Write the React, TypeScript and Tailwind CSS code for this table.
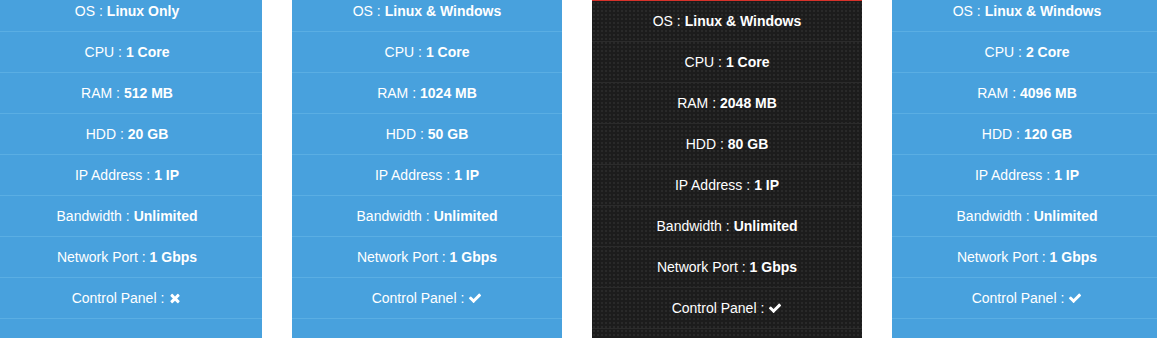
type Plan = {
  os: string;
  cpu: string;
  ram: string;
  hdd: string;
  panel: boolean;
  featured?: boolean;
};

const plans: Plan[] = [
  { os: "Linux Only", cpu: "1 Core", ram: "512 MB", hdd: "20 GB", panel: false },
  { os: "Linux & Windows", cpu: "1 Core", ram: "1024 MB", hdd: "50 GB", panel: true },
  { os: "Linux & Windows", cpu: "1 Core", ram: "2048 MB", hdd: "80 GB", panel: true, featured: true },
  { os: "Linux & Windows", cpu: "2 Core", ram: "4096 MB", hdd: "120 GB", panel: true },
];

// font-awesome 4 style glyphs
const CheckIcon = () => (
  <svg viewBox="0 0 1792 1792" className="w-[14px] h-[14px] fill-current">
    <path d="M1671 566q0 40-28 68l-724 724-136 136q-28 28-68 28t-68-28l-136-136-362-362q-28-28-28-68t28-68l136-136q28-28 68-28t68 28l294 295 656-657q28-28 68-28t68 28l136 136q28 28 28 68z" />
  </svg>
);

const TimesIcon = () => (
  <svg viewBox="0 0 1792 1792" className="w-[14px] h-[14px] fill-current">
    <path d="M1490 1322q0 40-28 68l-136 136q-28 28-68 28t-68-28l-294-294-294 294q-28 28-68 28t-68-28l-136-136q-28-28-28-68t28-68l294-294-294-294q-28-28-28-68t28-68l136-136q28-28 68-28t68 28l294 294 294-294q28-28 68-28t68 28l136 136q28 28 28 68t-28 68l-294 294 294 294q28 28 28 68z" />
  </svg>
);

const Row = ({ label, children, featured }) => (
  <li
    className={
      "h-[41px] flex items-center justify-center border-b " +
      (featured ? "border-[#2b2b2b]" : "border-[#5aaee3]")
    }
  >
    <span>{label} : </span>
    <span className="font-bold ml-1 flex items-center">{children}</span>
  </li>
);

const Column = ({ plan }: { plan: Plan }) => {
  const f = plan.featured;
  return (
    <div
      className={
        "w-[270px] shrink-0 text-white text-[14px] " +
        (f
          ? "bg-[#1c1c1c] bg-[radial-gradient(#292929_1px,transparent_1px)] bg-[length:4px_4px] border-t-2 border-[#d7322a] h-[340px] -mt-[1px]"
          : "bg-[#48a1dd] -mt-[9px] h-[360px]")
      }
    >
      <ul>
        <Row label="OS" featured={f}>{plan.os}</Row>
        <Row label="CPU" featured={f}>{plan.cpu}</Row>
        <Row label="RAM" featured={f}>{plan.ram}</Row>
        <Row label="HDD" featured={f}>{plan.hdd}</Row>
        <Row label="IP Address" featured={f}>1 IP</Row>
        <Row label="Bandwidth" featured={f}>Unlimited</Row>
        <Row label="Network Port" featured={f}>1 Gbps</Row>
        <Row label="Control Panel" featured={f}>
          {plan.panel ? <CheckIcon /> : <TimesIcon />}
        </Row>
      </ul>
    </div>
  );
};

export default function App() {
  return (
    <div className="w-[1157px] h-[338px] overflow-hidden bg-white font-['Liberation_Sans',Arial,sans-serif]">
      <div className="flex items-start gap-[30px] -ml-[8px]">
        {plans.map((p, i) => (
          <Column key={i} plan={p} />
        ))}
      </div>
    </div>
  );
}
